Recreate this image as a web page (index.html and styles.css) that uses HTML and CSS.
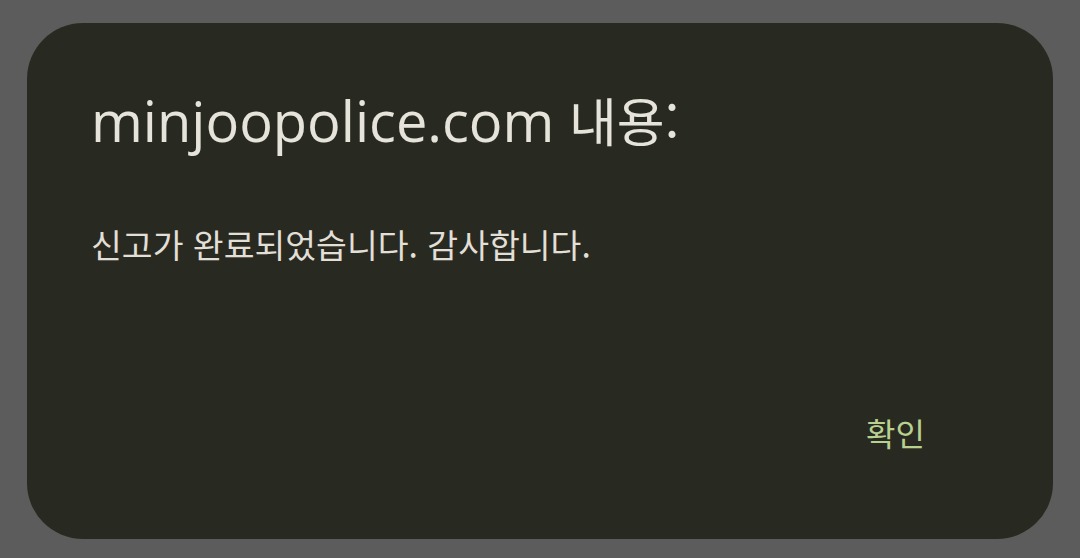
FILE: index.html
```html
<!DOCTYPE html>
<html lang="ko">
<head>
<meta charset="utf-8">
<link rel="stylesheet" href="styles.css">
</head>
<body>
<div class="dialog">
  <h1 class="title">minjoopolice.com <span class="title-ko">내용:</span></h1>
  <p class="message">신고가 완료되었습니다. 감사합니다.</p>
  <div class="actions">
    <button class="btn">확인</button>
  </div>
</div>
</body>
</html>
```
FILE: styles.css
```css
html, body {
  margin: 0;
  padding: 0;
  width: 1080px;
  height: 558px;
  background: #5c5c5c;
  overflow: hidden;
}
body {
  padding: 23px 27px 19px 27px;
  box-sizing: border-box;
}
.dialog {
  width: 1026px;
  height: 516px;
  box-sizing: border-box;
  background: #282a22;
  border-radius: 56px;
  padding: 63px 64px 0 64px;
  display: flex;
  flex-direction: column;
}
.title {
  margin: 0;
  font-family: "Open Sans", "Noto Sans CJK KR", sans-serif;
  font-weight: 400;
  font-size: 56px;
  line-height: 68px;
  height: 68px;
  color: #e5e3da;
  white-space: nowrap;
}
.title-ko {
  font-family: "Noto Sans CJK KR", sans-serif;
  font-size: 52px;
}
.message {
  margin: 68px 0 0 0;
  font-family: "Noto Sans CJK KR", sans-serif;
  font-size: 33.5px;
  line-height: 44px;
  color: #e2dfd6;
}
.actions {
  margin-top: auto;
  margin-bottom: 85px;
  display: flex;
  justify-content: flex-end;
  padding-right: 64px;
}
.btn {
  background: none;
  border: 0;
  padding: 0;
  font-family: "Noto Sans CJK KR", sans-serif;
  font-size: 32px;
  line-height: 44px;
  color: #b9d18f;
}
```
